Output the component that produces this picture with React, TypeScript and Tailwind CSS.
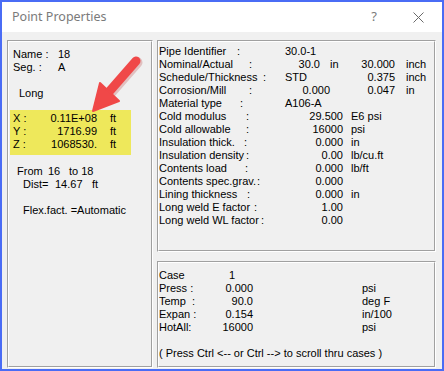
import React from 'react'

const font = { fontFamily: '"Liberation Sans", Arial, sans-serif' }

function Etched({ className = '', children }: { className?: string; children?: React.ReactNode }) {
  return (
    <div className={`border-t border-l border-t-[#a0a0a0] border-l-[#a0a0a0] border-r border-b border-r-white border-b-white ${className}`}>
      <div className="h-full border-t border-l border-t-white border-l-white border-r border-b border-r-[#a0a0a0] border-b-[#a0a0a0]">
        {children}
      </div>
    </div>
  )
}

function Lbl({ w, text }: { w: string; text: string }) {
  return (
    <span className="w-[126px] shrink-0">
      <span className={`${w} flex justify-between`}>
        <span>{text}</span>
        <span>:</span>
      </span>
    </span>
  )
}

function Arrow() {
  return (
    <svg className="absolute left-0 top-0 pointer-events-none" width="153" height="130" viewBox="0 0 153 130">
      <g transform="translate(-7,-40)">
        <line x1="135" y1="60" x2="107" y2="92" stroke="#b53030" strokeOpacity="0.25" strokeWidth="11" strokeLinecap="round" transform="translate(1,1.5)" />
        <line x1="135" y1="60" x2="107" y2="92" stroke="#f04848" strokeWidth="9" strokeLinecap="round" />
        <polygon points="92,110 118,100 99,82" fill="#f04848" stroke="#f04848" strokeWidth="2" strokeLinejoin="round" />
      </g>
    </svg>
  )
}

export default function App() {
  return (
    <div className="w-[444px] h-[371px] bg-[#4a6cf5] p-[2px] flex flex-col overflow-hidden" style={font}>
      <div className="h-[30px] bg-white flex items-center pl-[10px] shrink-0">
        <span className="text-[12.5px] text-[#7a7a7a]" style={{ fontFamily: '"Noto Sans", "Open Sans", sans-serif' }}>Point Properties</span>
        <span className="ml-auto text-[13px] text-[#7a7a7a] mr-[36px]" style={{ fontFamily: '"Noto Sans", sans-serif' }}>?</span>
        <svg width="11" height="11" viewBox="0 0 11 11" className="mr-[18px]">
          <path d="M0.5 0.5 L10.5 10.5 M10.5 0.5 L0.5 10.5" stroke="#6a6a6a" strokeWidth="1" />
        </svg>
      </div>

      <div className="flex-1 bg-[#f0f0f0] flex gap-[4px] pl-[5px] pr-[6px] pt-[8px] pb-[1px] text-[11px] leading-[13px] text-black">
        {/* left panel */}
        <Etched className="w-[146px] shrink-0 relative">
          <div className="pt-[6px] pl-[4px]">
            <div className="flex"><span className="w-[45px] whitespace-pre">Name :</span><span>18</span></div>
            <div className="flex"><span className="w-[45px] whitespace-pre">Seg. :</span><span>A</span></div>
            <div className="h-[13px]" />
            <div className="ml-[6px]">Long</div>
          </div>
          <div className="ml-[1px] mt-[10px] w-[121px] bg-[#eee85b] pt-[2px] pb-[4px] pl-[3px]">
            {[['X :', '0.11E+08'], ['Y :', '1716.99'], ['Z :', '1068530.']].map(([l, v]) => (
              <div key={l} className="flex">
                <span className="w-[20px] whitespace-pre">{l}</span>
                <span className="w-[64px] text-right">{v}</span>
                <span className="pl-[13px]">ft</span>
              </div>
            ))}
          </div>
          <div className="pl-[4px] mt-[10px]">
            <div className="flex">
              <span className="ml-[4px] w-[31px]">From</span>
              <span className="w-[21px]">16</span>
              <span>to 18</span>
            </div>
            <div className="flex">
              <span className="ml-[10px] w-[32px]">Dist=</span>
              <span className="w-[37px]">14.67</span>
              <span>ft</span>
            </div>
            <div className="h-[13px]" />
            <div className="ml-[10px]">Flex.fact. =Automatic</div>
          </div>
          <Arrow />
        </Etched>

        {/* right column */}
        <div className="flex-1 flex flex-col gap-[9px]">
          <Etched className="h-[212px] shrink-0">
            <div className="pt-[3px]">
              <div className="flex"><Lbl w="w-[81px]" text="Pipe Identifier" /><span>30.0-1</span></div>
              <div className="flex">
                <Lbl w="w-[93px]" text="Nominal/Actual" />
                <span className="w-[35px] text-right">30.0</span>
                <span className="w-[28px] pl-[10px]">in</span>
                <span className="w-[47px] text-right">30.000</span>
                <span className="pl-[11px]">inch</span>
              </div>
              <div className="flex">
                <Lbl w="w-[107px]" text="Schedule/Thickness" />
                <span className="w-[62px]">STD</span>
                <span className="w-[48px] text-right">0.375</span>
                <span className="pl-[11px]">inch</span>
              </div>
              <div className="flex">
                <Lbl w="w-[93px]" text="Corrosion/Mill" />
                <span className="w-[45px] text-right">0.000</span>
                <span className="w-[65px] text-right">0.047</span>
                <span className="pl-[11px]">in</span>
              </div>
              <div className="flex"><Lbl w="w-[84px]" text="Material type" /><span>A106-A</span></div>
              {[
                ['w-[90px]', 'Cold modulus', '29.500', 'E6 psi'],
                ['w-[90px]', 'Cold allowable', '16000', 'psi'],
                ['w-[88px]', 'Insulation thick.', '0.000', 'in'],
                ['w-[90px]', 'Insulation density', '0.00', 'lb/cu.ft'],
                ['w-[89px]', 'Contents load', '0.000', 'lb/ft'],
                ['w-[101px]', 'Contents spec.grav.', '0.000', ''],
                ['w-[91px]', 'Lining thickness', '0.000', 'in'],
                ['w-[98px]', 'Long weld E factor', '1.00', ''],
                ['w-[105px]', 'Long weld WL factor', '0.00', ''],
              ].map(([w, l, v, u]) => (
                <div key={l} className="flex">
                  <Lbl w={w} text={l} />
                  <span className="w-[58px] text-right">{v}</span>
                  <span className="pl-[8px]">{u}</span>
                </div>
              ))}
            </div>
          </Etched>

          <Etched className="flex-1">
            <div className="pt-[6px]">
              <div className="flex"><span className="w-[70px]">Case</span><span>1</span></div>
              {[
                ['Press :', '0.000', 'psi'],
                ['Temp  :', '90.0', 'deg F'],
                ['Expan :', '0.154', 'in/100'],
                ['HotAll:', '16000', 'psi'],
              ].map(([l, v, u]) => (
                <div key={l} className="flex">
                  <span className="w-[60px] whitespace-pre">{l}</span>
                  <span className="w-[34px] text-right">{v}</span>
                  <span className="pl-[109px]">{u}</span>
                </div>
              ))}
              <div className="h-[13px]" />
              <div>( Press Ctrl &lt;-- or Ctrl --&gt; to scroll thru cases )</div>
            </div>
          </Etched>
        </div>
      </div>
    </div>
  )
}
